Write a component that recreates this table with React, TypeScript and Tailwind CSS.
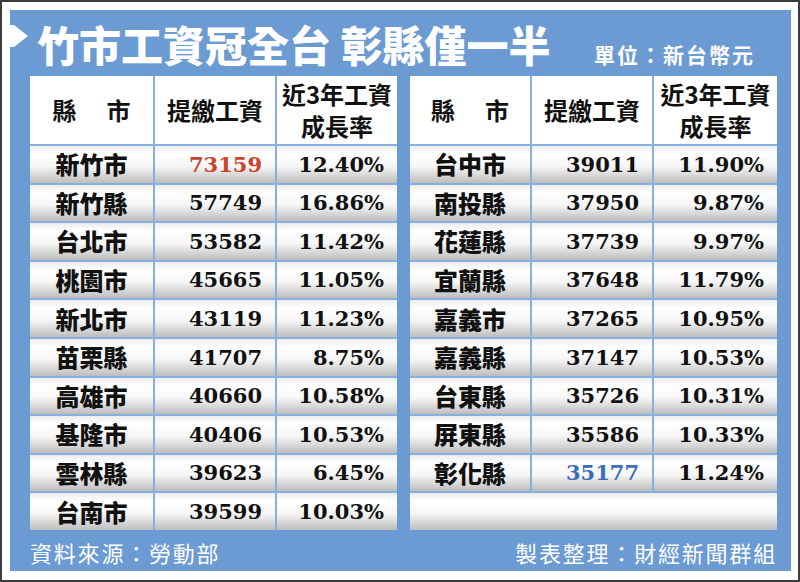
import React from "react";

type Row = [string, string, string, ("red" | "blue")?];

const left: Row[] = [
  ["新竹市", "73159", "12.40%", "red"],
  ["新竹縣", "57749", "16.86%"],
  ["台北市", "53582", "11.42%"],
  ["桃園市", "45665", "11.05%"],
  ["新北市", "43119", "11.23%"],
  ["苗栗縣", "41707", "8.75%"],
  ["高雄市", "40660", "10.58%"],
  ["基隆市", "40406", "10.53%"],
  ["雲林縣", "39623", "6.45%"],
  ["台南市", "39599", "10.03%"],
];

const right: Row[] = [
  ["台中市", "39011", "11.90%"],
  ["南投縣", "37950", "9.87%"],
  ["花蓮縣", "37739", "9.97%"],
  ["宜蘭縣", "37648", "11.79%"],
  ["嘉義市", "37265", "10.95%"],
  ["嘉義縣", "37147", "10.53%"],
  ["台東縣", "35726", "10.31%"],
  ["屏東縣", "35586", "10.33%"],
  ["彰化縣", "35177", "11.24%", "blue"],
];

const sans = "font-['Noto_Sans_CJK_TC','Noto_Sans',sans-serif]";
const serifNum = "font-['DejaVu_Serif','Liberation_Serif',serif]";
const grad =
  "bg-[linear-gradient(to_bottom,#ececec_0%,#ffffff_22%,#f6f6f6_55%,#bdbdbd_100%)]";

function Table({ rows, cols, filler }: { rows: Row[]; cols: string; filler?: boolean }) {
  return (
    <div
      className={`grid ${cols} grid-rows-[68px_repeat(10,1fr)] gap-[2px] bg-[#86b0de] h-full`}
    >
      <div className={`bg-white flex items-center justify-center gap-[30px] ${sans} font-bold text-[24px] text-[#111]`}>
        <span>縣</span>
        <span>市</span>
      </div>
      <div className={`bg-white flex items-center justify-center ${sans} font-bold text-[24px] text-[#111]`}>
        提繳工資
      </div>
      <div className={`bg-white flex flex-col items-center justify-center ${sans} font-bold text-[24px] leading-[32px] text-[#111]`}>
        <span>近3年工資</span>
        <span>成長率</span>
      </div>
      {rows.map(([city, wage, rate, hl]) => (
        <React.Fragment key={city}>
          <div className={`${grad} flex items-center justify-center ${sans} font-black text-[24px] text-[#111]`}>
            {city}
          </div>
          <div
            className={`${grad} flex items-center justify-end pr-[13px] ${serifNum} font-bold text-[21px] ${
              hl === "red" ? "text-[#c8442c]" : hl === "blue" ? "text-[#3b6eb6]" : "text-[#111]"
            }`}
          >
            {wage}
          </div>
          <div className={`${grad} flex items-center justify-end pr-[13px] ${serifNum} font-bold text-[21px] text-[#111]`}>
            {rate}
          </div>
        </React.Fragment>
      ))}
      {filler && <div className={`${grad} col-span-3`} />}
    </div>
  );
}

export default function App() {
  return (
    <div className="w-[800px] h-[582px] border-2 border-[#3c3c3c] bg-white pt-[8px] pl-[8px] pr-[7px] pb-[9px]">
      <div className="h-full bg-[#6b9bd2] flex flex-col">
        <div className="h-[66px] flex items-start justify-between pr-[36px]">
          <div className="flex items-start">
            <svg width="18" height="22" viewBox="0 0 18 22" className="mt-[15px]">
              <polygon points="0,0 4,0 18,11 4,22 0,22" fill="#ffffff" />
            </svg>
            <div className={`ml-[9px] mt-[13px] ${sans} font-black text-[42px] leading-[42px] text-white`}>
              竹市工資冠全台 彰縣僅一半
            </div>
          </div>
          <div className={`mt-[34px] ${sans} font-bold text-[21px] leading-[21px] tracking-[2px] text-white`}>
            單位：新台幣元
          </div>
        </div>
        <div className="h-[454px] flex pl-[20px] gap-[13px]">
          <div className="w-[367px] h-full">
            <Table rows={left} cols="grid-cols-[123px_120px_120px]" />
          </div>
          <div className="w-[367px] h-full">
            <Table rows={right} cols="grid-cols-[120px_120px_123px]" filler />
          </div>
        </div>
        <div className={`flex-1 flex items-center justify-between pl-[20px] pr-[14px] pt-[2px] ${sans} text-[22px] leading-[22px] tracking-[1.8px] text-white`}>
          <span>資料來源：勞動部</span>
          <span>製表整理：財經新聞群組</span>
        </div>
      </div>
    </div>
  );
}
